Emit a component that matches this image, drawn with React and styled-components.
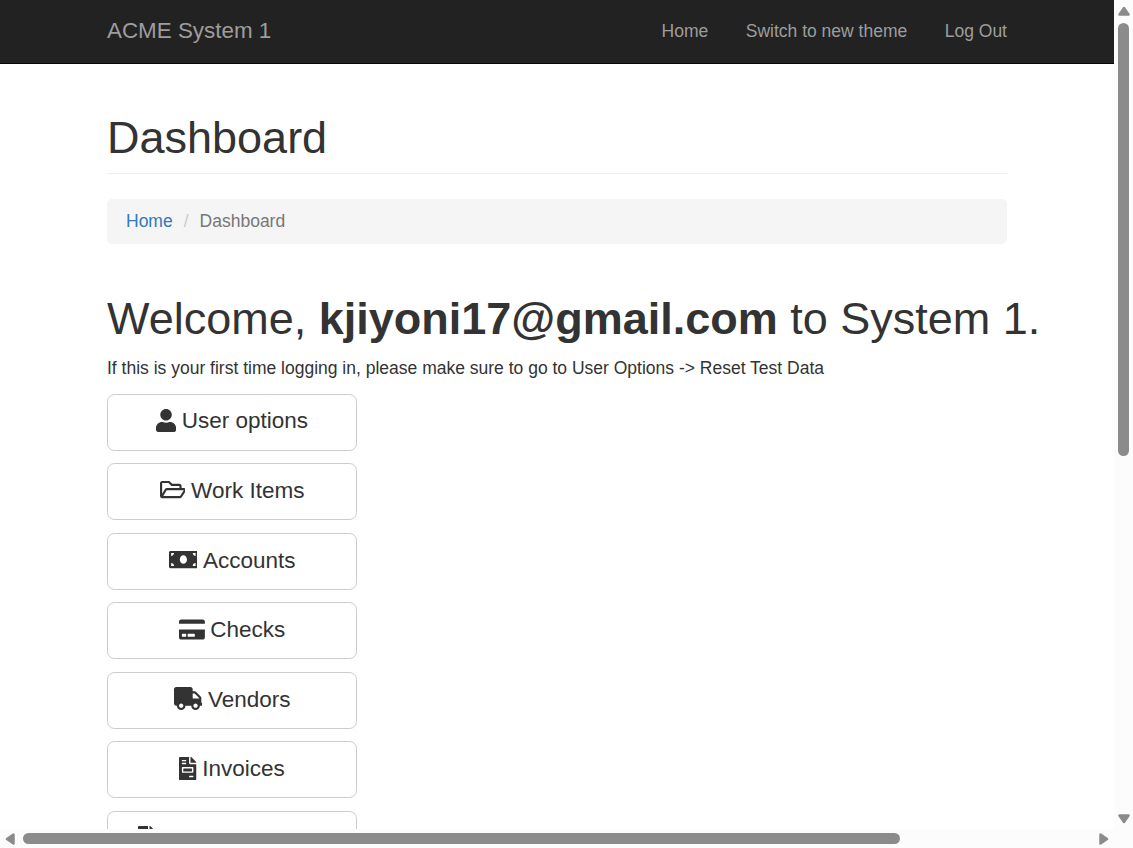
import React from "react";
import styled, { createGlobalStyle } from "styled-components";
import {
  FaUser,
  FaRegFolderOpen,
  FaMoneyBill,
  FaCreditCard,
  FaTruck,
  FaFileInvoice,
  FaFileInvoiceDollar,
} from "react-icons/fa";

const GlobalStyle = createGlobalStyle`
  * { box-sizing: border-box; }
  html, body { margin: 0; padding: 0; overflow: hidden; }
  body {
    background: #fff;
    color: #333;
    font-family: "Liberation Sans", Arial, sans-serif;
    font-size: 17.5px;
    line-height: 25px;
  }
`;

const Window = styled.div`
  width: 1133px;
  height: 848px;
  display: grid;
  grid-template-columns: 1114px 19px;
  grid-template-rows: 829px 19px;
  background: #fcfcfc;
`;

const Viewport = styled.div`
  overflow: hidden;
  background: #fff;
`;

const Navbar = styled.nav`
  height: 64px;
  padding: 0 107px;
  display: flex;
  justify-content: space-between;
  background: #222;
  border-bottom: 1px solid #080808;
`;

const Brand = styled.a`
  padding-top: 18px;
  font-size: 22.4px;
  color: #9d9d9d;
  white-space: nowrap;
`;

const NavLinks = styled.div`
  display: flex;
  gap: 37.5px;
  padding-top: 19px;
`;

const NavLink = styled.a`
  color: #9d9d9d;
  white-space: nowrap;
`;

const Container = styled.main`
  width: 900px;
  margin-left: 107px;
`;

const PageHeader = styled.header`
  height: 110px;
  padding-top: 49px;
  border-bottom: 1px solid #eee;
`;

const Heading = styled.h1`
  margin: 0;
  font-size: 45px;
  line-height: 50px;
  font-weight: 400;
  white-space: nowrap;
`;

const Breadcrumb = styled.div`
  height: 45px;
  margin: 25px 0 50px;
  padding: 10px 19px;
  display: flex;
  background: #f5f5f5;
  border-radius: 5px;
`;

const Crumb = styled.a`
  color: ${(p) => (p.$current ? "#777" : "#337ab7")};
`;

const Separator = styled.span`
  padding: 0 11px;
  color: #ccc;
`;

const Hint = styled.p`
  margin: 12px 0 12.6px;
  white-space: nowrap;
`;

const Menu = styled.div`
  display: flex;
  flex-direction: column;
  gap: 12.5px;
`;

const MenuButton = styled.button`
  width: 250px;
  height: 57.06px;
  flex: none;
  display: flex;
  justify-content: ${(p) => (p.$start ? "flex-start" : "center")};
  gap: 5.6px;
  padding: ${(p) => (p.$start ? "13.9px 0 0 30px" : "13.9px 0 0")};
  background: #fff;
  border: 1px solid #ccc;
  border-radius: 7.5px;
  color: #333;
  font: 22.5px/25px "Liberation Sans", Arial, sans-serif;

  svg {
    width: ${(p) => p.$iconWidth}px;
    height: 23px;
    margin-top: 0.4px;
    flex: none;
  }
`;

const ScrollBar = styled.div`
  display: flex;
  flex-direction: ${(p) => (p.$vertical ? "column" : "row")};
  align-items: center;
  justify-content: space-between;
  padding: ${(p) => (p.$vertical ? "6px 0 5px" : "0 5px")};
`;

const Thumb = styled.div`
  width: ${(p) => (p.$vertical ? "11px" : "877px")};
  height: ${(p) => (p.$vertical ? "433px" : "11px")};
  margin: ${(p) => (p.$vertical ? "7px 0 auto" : "0 auto 0 8px")};
  background: #8b8b8b;
  border-radius: 6px;
`;

const ArrowIcon = styled.svg`
  flex: none;
  transform: rotate(${(p) => p.$turn}deg);
`;

const Arrow = ({ turn = 0, wide }) => (
  <ArrowIcon $turn={turn} width={wide ? 12 : 10} height={wide ? 10 : 12} viewBox={wide ? "0 0 12 10" : "0 0 10 12"}>
    <path
      d={wide ? "M6 2L10.5 8.5H1.5Z" : "M2 6L8.5 1.5V10.5Z"}
      fill="#8b8b8b"
      stroke="#8b8b8b"
      strokeWidth="2.5"
      strokeLinejoin="round"
    />
  </ArrowIcon>
);

const items = [
  { icon: FaUser, width: 20.1, label: "User options" },
  { icon: FaRegFolderOpen, width: 25.9, label: "Work Items" },
  { icon: FaMoneyBill, width: 28.75, label: "Accounts" },
  { icon: FaCreditCard, width: 25.9, label: "Checks" },
  { icon: FaTruck, width: 28.75, label: "Vendors" },
  { icon: FaFileInvoice, width: 17.25, label: "Invoices" },
];

export default function App() {
  return (
    <>
      <GlobalStyle />
      <Window>
        <Viewport>
          <Navbar>
            <Brand>ACME System 1</Brand>
            <NavLinks>
              <NavLink>Home</NavLink>
              <NavLink>Switch to new theme</NavLink>
              <NavLink>Log Out</NavLink>
            </NavLinks>
          </Navbar>
          <Container>
            <PageHeader>
              <Heading>Dashboard</Heading>
            </PageHeader>
            <Breadcrumb>
              <Crumb>Home</Crumb>
              <Separator>/</Separator>
              <Crumb $current>Dashboard</Crumb>
            </Breadcrumb>
            <Heading>
              Welcome, <strong>kjiyoni17@gmail.com</strong> to System 1.
            </Heading>
            <Hint>
              If this is your first time logging in, please make sure to go to User Options -&gt; Reset Test Data
            </Hint>
            <Menu>
              {items.map(({ icon: Icon, width, label }) => (
                <MenuButton key={label} $iconWidth={width}>
                  <Icon />
                  <span>{label}</span>
                </MenuButton>
              ))}
              <MenuButton $start $iconWidth={17.25}>
                <FaFileInvoiceDollar />
              </MenuButton>
            </Menu>
          </Container>
        </Viewport>
        <ScrollBar $vertical>
          <Arrow wide />
          <Thumb $vertical />
          <Arrow wide turn={180} />
        </ScrollBar>
        <ScrollBar>
          <Arrow />
          <Thumb />
          <Arrow turn={180} />
        </ScrollBar>
      </Window>
    </>
  );
}
